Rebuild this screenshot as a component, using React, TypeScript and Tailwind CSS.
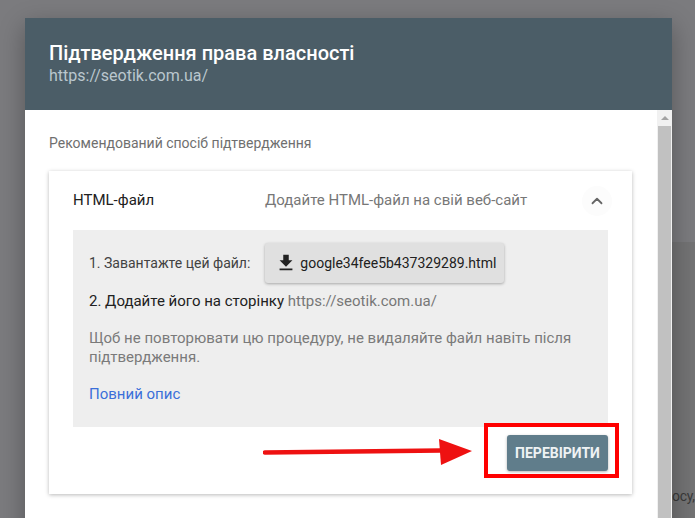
import { ChevronUp } from "lucide-react";

function DownloadIcon() {
  return (
    <svg viewBox="0 0 24 24" className="h-[22px] w-[22px] fill-[#212121]" aria-hidden>
      <path d="M19 9h-4V3H9v6H5l7 7 7-7zM5 18v2h14v-2H5z" />
    </svg>
  );
}

function RedArrow() {
  return (
    <svg className="absolute left-[263px] top-[437px]" width="212" height="30" viewBox="0 0 212 30" aria-hidden>
      <path d="M2 15.5 L178 13.5" stroke="#ee1111" strokeWidth="4.5" strokeLinecap="round" />
      <path d="M176 2 L209 14 L178 28 Z" fill="#ee1111" />
    </svg>
  );
}

export default function App() {
  return (
    <div className="relative h-[518px] w-[695px] overflow-hidden bg-[#7b7b7e] font-['Roboto',sans-serif]">
      {/* page behind the overlay */}
      <div className="absolute bottom-0 left-[600px] right-0 top-[242px] bg-[#737374]">
        <div className="absolute left-[72px] top-[244px] text-[14px] tracking-[-0.3px] text-[#3a3a3a]">ocy,</div>
      </div>

      <div className="absolute left-[25px] top-[18px] flex h-[520px] w-[647px] flex-col bg-white shadow-[0_8px_24px_rgba(0,0,0,0.3)]">
        <div className="flex h-[92px] flex-col justify-center bg-[#4b5d67] px-6 pb-[2px]">
          <h1 className="text-[20px] font-medium leading-[26px] text-white">Підтвердження права власності</h1>
          <p className="text-[16px] leading-[20px] text-[#bac7ce]">https://seotik.com.ua/</p>
        </div>

        <div className="flex min-h-0 flex-1">
          <div className="flex-1 pl-6 pr-[25px]">
            <p className="mt-[24px] text-[14px] leading-[18px] text-[#6f6f6f]">Рекомендований спосіб підтвердження</p>

            <div className="relative mt-[19px] bg-white px-6 pb-[23px] shadow-[0_1px_4px_rgba(0,0,0,0.28)]">
              <div className="flex h-[59px] items-center text-[15px]">
                <span className="w-[192px] text-[#212121]">HTML-файл</span>
                <span className="flex-1 text-[#777777]">Додайте HTML-файл на свій веб-сайт</span>
                <span className="mr-[-4px] flex h-[30px] w-[30px] items-center justify-center rounded-full bg-[#fcfcfc]">
                  <ChevronUp className="h-[18px] w-[18px] text-[#666666]" strokeWidth={2.4} />
                </span>
              </div>

              <div className="bg-[#eeeeee] px-4 pb-[23px] pt-[13px]">
                <div className="flex h-[40px] items-center">
                  <span className="text-[14px] text-[#424242]">1. Завантажте цей файл:</span>
                  <button
                    type="button"
                    className="ml-[15px] flex h-[40px] w-[239px] items-center gap-[3px] rounded-[3px] bg-[#e0e0e0] pl-[10px] text-[14px] text-[#212121] shadow-[0_1px_3px_rgba(0,0,0,0.3)]"
                  >
                    <DownloadIcon />
                    google34fee5b437329289.html
                  </button>
                </div>
                <p className="mt-[8px] text-[15px] leading-[20px] text-[#212121]">
                  2. Додайте його на сторінку <span className="text-[#777777]">https://seotik.com.ua/</span>
                </p>
                <p className="mt-[18px] text-[15px] leading-[19px] text-[#7a7a7a]">
                  Щоб не повторювати цю процедуру, не видаляйте файл навіть після підтвердження.
                </p>
                <p className="mt-[17px] text-[15px] leading-[20px] text-[#3b6fd9]">Повний опис</p>
              </div>

              <div className="flex justify-end pt-[8px]">
                <button
                  type="button"
                  className="h-[36px] w-[101px] rounded-[3px] bg-[#607d8b] text-[14px] font-bold text-[#eef2f4] shadow-[0_1px_3px_rgba(0,0,0,0.3)]"
                >
                  ПЕРЕВІРИТИ
                </button>
              </div>
            </div>
          </div>

          <div className="flex w-[15px] flex-col bg-[#f1f1f1]">
            <div className="flex h-[16px] items-center justify-center">
              <span className="h-0 w-0 border-x-[4px] border-b-[4px] border-x-transparent border-b-[#a3a3a3]" />
            </div>
            <div className="ml-px mr-px flex-1 bg-[#c1c1c1]" />
          </div>
        </div>
      </div>

      <div className="absolute left-[484px] top-[423px] h-[55px] w-[135px] border-[4px] border-[#ff0000]" />
      <RedArrow />
    </div>
  );
}
